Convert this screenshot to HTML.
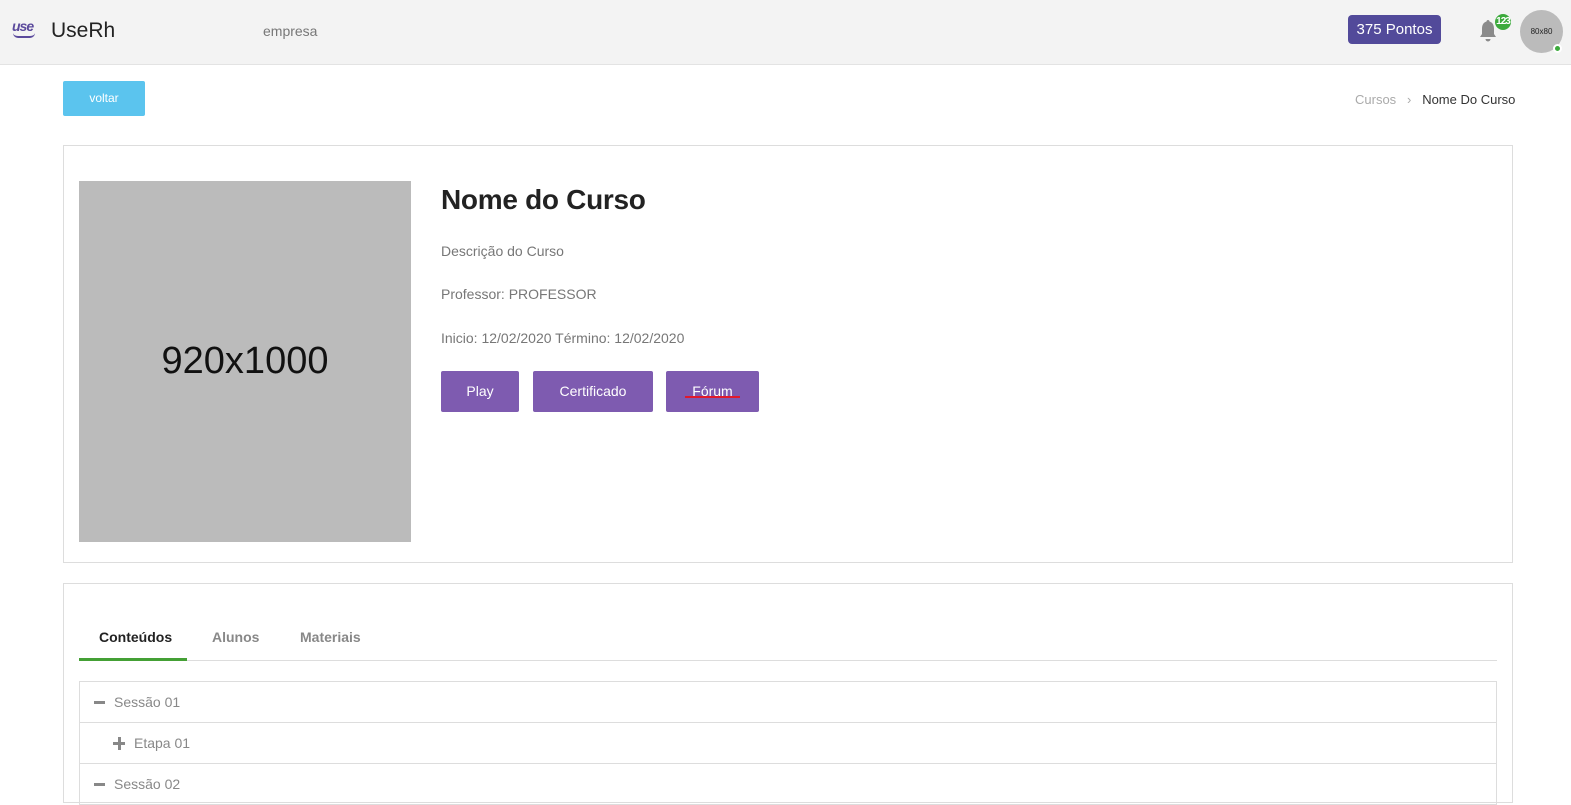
<!DOCTYPE html>
<html><head><meta charset="utf-8"><style>
*{box-sizing:border-box;margin:0;padding:0}
body{width:1571px;height:787px;overflow:hidden;background:#fff;font-family:"Liberation Sans",sans-serif;position:relative}
.abs{position:absolute}
.hdr{left:0;top:0;width:1571px;height:65px;background:#f3f3f3;border-bottom:1px solid #e3e3e3}
.btn{position:absolute;background:#7e5bb0;color:#fff;font-size:14px;text-align:center;line-height:41px;border-radius:2px;top:371px;height:41px}
.card{border:1px solid #ddd;background:#fff}
.row{position:absolute;left:79px;width:1418px;height:42px;border:1px solid #ddd;color:#888;font-size:14px;line-height:40px}
</style></head><body>
<div class="abs hdr"></div>
<div class="abs" style="left:12px;top:18px;color:#5b4a9c;font-weight:bold;font-style:italic;font-size:14px;letter-spacing:-1px">use</div>
<div class="abs" style="left:13px;top:33px;width:22px;height:5px;border-bottom:2px solid #5b4a9c;border-radius:0 0 12px 12px"></div>
<div class="abs" style="left:51px;top:19px;font-size:21px;color:#222">UseRh</div>
<div class="abs" style="left:263px;top:23px;font-size:14px;color:#777">empresa</div>
<div class="abs" style="left:1348px;top:15px;width:93px;height:29px;background:#524a9a;border-radius:4px;color:#fff;font-size:15px;text-align:center;line-height:29px">375 Pontos</div>
<svg class="abs" style="left:1477px;top:19px" width="22" height="24" viewBox="0 0 22 24"><path d="M11 1c1 0 1.5.7 1.5 1.5C16 3.5 17 6.5 17 10v5l2 3H3l2-3v-5c0-3.5 1-6.5 4.5-7.5C9.5 1.7 10 1 11 1z" fill="#8a8a8a"/><path d="M8.5 20h5a2.5 2.5 0 01-5 0z" fill="#8a8a8a"/></svg>
<div class="abs" style="left:1495px;top:14px;width:16px;height:16px;border-radius:50%;background:#3caa3c;color:#fff;font-size:10px;font-weight:bold;text-align:center;line-height:16px;letter-spacing:-1px">123</div>
<div class="abs" style="left:1520px;top:10px;width:43px;height:43px;border-radius:50%;background:#bbb;font-size:8px;text-align:center;line-height:43px;color:#222">80x80</div>
<div class="abs" style="left:1553px;top:44px;width:9px;height:9px;border-radius:50%;background:#3caa3c;border:2px solid #fff"></div>
<div class="abs" style="left:63px;top:81px;width:82px;height:35px;background:#5bc4ee;color:#fff;font-size:12px;text-align:center;line-height:35px;border-radius:2px">voltar</div>
<div class="abs" style="left:1355px;top:92px;font-size:13px;color:#aaa">Cursos&nbsp;&nbsp;&nbsp;&rsaquo;&nbsp;&nbsp;&nbsp;<span style="color:#333">Nome Do Curso</span></div>
<div class="abs card" style="left:63px;top:145px;width:1450px;height:418px"></div>
<div class="abs" style="left:79px;top:181px;width:332px;height:361px;background:#bbb;font-size:38px;color:#111;text-align:center;line-height:361px">920x1000</div>
<div class="abs" style="left:441px;top:184px;font-size:28px;color:#222;font-weight:bold;letter-spacing:-0.3px">Nome do Curso</div>
<div class="abs" style="left:441px;top:243px;font-size:14px;color:#777">Descrição do Curso</div>
<div class="abs" style="left:441px;top:286px;font-size:14px;color:#777">Professor: PROFESSOR</div>
<div class="abs" style="left:441px;top:330px;font-size:14px;color:#777">Inicio: 12/02/2020 Término: 12/02/2020</div>
<div class="btn" style="left:441px;width:78px">Play</div>
<div class="btn" style="left:533px;width:120px">Certificado</div>
<div class="btn" style="left:666px;width:93px">Fórum</div>
<div class="abs" style="left:685px;top:396px;width:55px;height:2px;background:#e0192c"></div>
<div class="abs card" style="left:63px;top:583px;width:1450px;height:220px"></div>
<div class="abs" style="left:99px;top:629px;font-size:14px;font-weight:bold;color:#222">Conteúdos</div>
<div class="abs" style="left:212px;top:629px;font-size:14px;font-weight:bold;color:#888">Alunos</div>
<div class="abs" style="left:300px;top:629px;font-size:14px;font-weight:bold;color:#888">Materiais</div>
<div class="abs" style="left:79px;top:660px;width:1418px;height:1px;background:#ddd"></div>
<div class="abs" style="left:79px;top:658px;width:108px;height:3px;background:#44a035"></div>
<div class="row" style="top:681px;padding-left:34px"><span class="abs" style="left:14px;top:19px;width:11px;height:3px;background:#888"></span>Sessão 01</div>
<div class="row" style="top:722px;padding-left:54px"><span class="abs" style="left:33px;top:19px;width:12px;height:3px;background:#888"></span><span class="abs" style="left:37.5px;top:14px;width:3px;height:13px;background:#888"></span>Etapa 01</div>
<div class="row" style="top:763px;padding-left:34px"><span class="abs" style="left:14px;top:19px;width:11px;height:3px;background:#888"></span>Sessão 02</div>
</body></html>
